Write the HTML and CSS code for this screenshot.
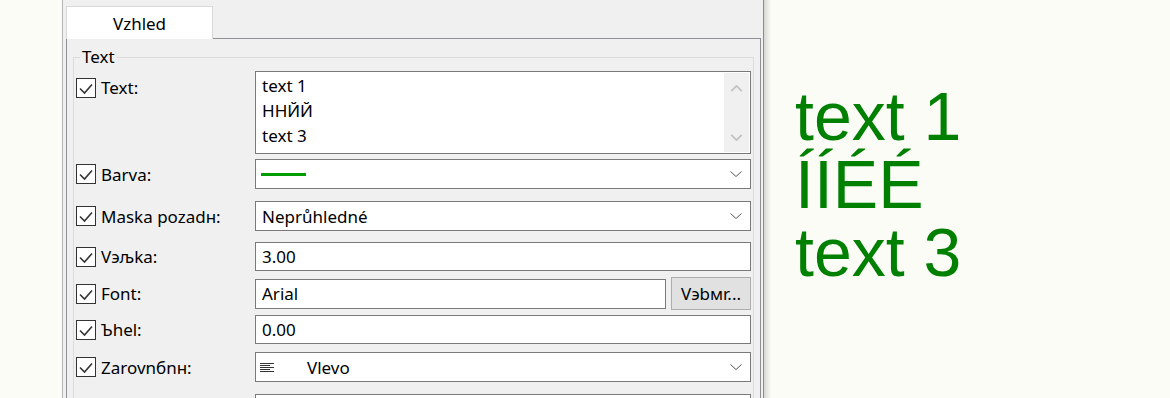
FILE: index.html
```html
<!DOCTYPE html>
<html>
<head>
  <meta charset="UTF-8">
  <title>Vzhled</title>
  <link rel="stylesheet" href="styles.css">
</head>
<body>
  <div class="outer-strip"></div>

  <div class="panel">
    <div class="tab-bar">
      <div class="tab active">Vzhled</div>
    </div>

    <div class="tab-page">
      <fieldset class="group">
        <legend>Text</legend>

        <div class="prop prop-multiline">
          <label class="prop-label">
            <span class="check"><svg viewBox="0 0 18 18"><path d="M3 9.5 L7.5 14 L15 5.5"/></svg></span>
            Text:
          </label>
          <div class="field memo">
            <div class="memo-lines">
              <div>text 1</div>
              <div>ННЙЙ</div>
              <div>text 3</div>
            </div>
            <div class="vscroll">
              <svg viewBox="0 0 14 8"><path d="M1 7 L7 1 L13 7"/></svg>
              <svg viewBox="0 0 14 8"><path d="M1 1 L7 7 L13 1"/></svg>
            </div>
          </div>
        </div>

        <div class="prop gap-a">
          <label class="prop-label">
            <span class="check"><svg viewBox="0 0 18 18"><path d="M3 9.5 L7.5 14 L15 5.5"/></svg></span>
            Barva:
          </label>
          <div class="field combo">
            <span class="color-line"></span>
            <svg class="chevron" viewBox="0 0 12 6"><path d="M0.5 0.5 L6 5.5 L11.5 0.5"/></svg>
          </div>
        </div>

        <div class="prop gap-c">
          <label class="prop-label">
            <span class="check"><svg viewBox="0 0 18 18"><path d="M3 9.5 L7.5 14 L15 5.5"/></svg></span>
            Maska pozadн:
          </label>
          <div class="field combo">
            <span class="value">Neprůhledné</span>
            <svg class="chevron" viewBox="0 0 12 6"><path d="M0.5 0.5 L6 5.5 L11.5 0.5"/></svg>
          </div>
        </div>

        <div class="prop gap-b short">
          <label class="prop-label">
            <span class="check"><svg viewBox="0 0 18 18"><path d="M3 9.5 L7.5 14 L15 5.5"/></svg></span>
            Vэљka:
          </label>
          <div class="field edit">3.00</div>
        </div>

        <div class="prop gap-font tall">
          <label class="prop-label">
            <span class="check"><svg viewBox="0 0 18 18"><path d="M3 9.5 L7.5 14 L15 5.5"/></svg></span>
            Font:
          </label>
          <div class="font-pick">
            <div class="field edit">Arial</div>
            <button class="pick-button">Vэbмr...</button>
          </div>
        </div>

        <div class="prop gap-a short">
          <label class="prop-label">
            <span class="check"><svg viewBox="0 0 18 18"><path d="M3 9.5 L7.5 14 L15 5.5"/></svg></span>
            Ъhel:
          </label>
          <div class="field edit">0.00</div>
        </div>

        <div class="prop gap-d">
          <label class="prop-label">
            <span class="check"><svg viewBox="0 0 18 18"><path d="M3 9.5 L7.5 14 L15 5.5"/></svg></span>
            Zarovnбnн:
          </label>
          <div class="field combo">
            <svg class="align-icon" viewBox="0 0 14 9"><path d="M0 0.5 H14 M0 2.5 H10 M0 4.5 H14 M0 6.5 H10 M0 8.5 H14"/></svg>
            <span class="value align-value">Vlevo</span>
            <svg class="chevron" viewBox="0 0 12 6"><path d="M0.5 0.5 L6 5.5 L11.5 0.5"/></svg>
          </div>
        </div>

        <div class="prop gap-c">
          <label class="prop-label">
            <span class="check"><svg viewBox="0 0 18 18"><path d="M3 9.5 L7.5 14 L15 5.5"/></svg></span>
          </label>
          <div class="field edit"></div>
        </div>
      </fieldset>
    </div>
  </div>

  <div class="panel-shadow"></div>

  <div class="preview">
    <div>text 1</div>
    <div>ÍÍÉÉ</div>
    <div>text 3</div>
  </div>
</body>
</html>
```

FILE: styles.css
```css
:root {
  --page-bg: #fcfcf7;
  --panel-bg: #f0f0f0;
  --field-border: #7a7a7a;
  --group-border: #dcdcdc;
  --tab-border: #d9d9d9;
  --page-border: #8e9196;
  --text-color: #000000;
  --preview-color: #008000;
}

html, body {
  height: 100%;
  margin: 0;
  overflow: hidden;
}

body {
  display: flex;
  background-color: var(--page-bg);
  font-family: "Noto Sans", "Open Sans", sans-serif;
  font-size: 17px;
  color: var(--text-color);
}

.outer-strip {
  width: 62px;
  flex-shrink: 0;
}

.panel {
  width: 695px;
  flex-shrink: 0;
  display: flex;
  flex-direction: column;
  background-color: var(--panel-bg);
  border-left: 1px solid #b4b4b4;
  border-right: 1px solid #8c8c8c;
  padding: 6px 2px 0 3px;
}

.panel-shadow {
  width: 7px;
  flex-shrink: 0;
  background: linear-gradient(to right, #d6d6d2, var(--page-bg));
}

.tab-bar {
  display: flex;
  height: 32px;
}

.tab {
  width: 147px;
  height: 33px;
  box-sizing: border-box;
  border: 1px solid var(--tab-border);
  border-bottom: none;
  background-color: #ffffff;
  text-align: center;
  line-height: 34px;
  position: relative;
  z-index: 1;
  margin-bottom: -1px;
}

.tab-page {
  flex-grow: 1;
  border: 1px solid var(--page-border);
  border-bottom: none;
  padding: 0 6px;
}

.group {
  margin: 6px 0 0 0;
  padding: 0 2px;
  border: 1px solid var(--group-border);
  border-bottom: none;
  min-inline-size: 0;
}

.group legend {
  padding: 0 2px;
  margin-left: 4px;
  line-height: 24px;
}

.prop {
  display: flex;
  align-items: center;
  height: 30px;
  margin-top: 5px;
}
.prop.short { height: 29px; }
.prop.tall { height: 33px; }
.prop.gap-a { margin-top: 5px; }
.prop.gap-b { margin-top: 11px; }
.prop.gap-c { margin-top: 12px; }
.prop.gap-d { margin-top: 8px; }
.prop.gap-font { margin-top: 6px; }

.prop-multiline {
  align-items: flex-start;
  height: 83px;
  margin-top: 2px;
}
.prop-multiline .prop-label {
  margin-top: 5px;
}

.prop-label {
  width: 179px;
  flex-shrink: 0;
  display: flex;
  align-items: center;
  gap: 5px;
  white-space: nowrap;
}

.check {
  width: 20px;
  height: 20px;
  box-sizing: border-box;
  border: 1px solid #333333;
  background-color: #ffffff;
  display: flex;
}
.check svg {
  width: 18px;
  height: 18px;
  fill: none;
  stroke: #333333;
  stroke-width: 1.6;
}

.field {
  width: 496px;
  height: 100%;
  box-sizing: border-box;
  border: 1px solid var(--field-border);
  background-color: #ffffff;
  display: flex;
  align-items: center;
  padding-left: 6px;
}

.memo {
  align-items: stretch;
  padding: 1px 1px 1px 6px;
}
.memo-lines {
  flex-grow: 1;
  line-height: 25px;
}
.vscroll {
  width: 25px;
  background-color: var(--panel-bg);
  display: flex;
  flex-direction: column;
  align-items: center;
  justify-content: space-between;
  padding: 12px 0 11px 0;
}
.vscroll svg {
  width: 13px;
  height: 7px;
  fill: none;
  stroke: #c2c2c2;
  stroke-width: 2;
}

.combo {
  padding-right: 8px;
}
.combo .value {
  flex-grow: 1;
}
.chevron {
  width: 12px;
  height: 6px;
  margin-left: auto;
  fill: none;
  stroke: #555555;
  stroke-width: 1;
}

.color-line {
  width: 45px;
  height: 3px;
  margin-left: -1px;
  background-color: #009c00;
}

.align-icon {
  width: 14px;
  height: 9px;
  margin-left: -2px;
  fill: none;
  stroke: #333333;
  stroke-width: 1;
}
.align-value {
  padding-left: 33px;
}

.font-pick {
  display: flex;
  align-items: center;
  gap: 5px;
  height: 100%;
}
.font-pick .field {
  width: 411px;
  height: 30px;
}
.pick-button {
  width: 80px;
  height: 33px;
  box-sizing: border-box;
  border: 1px solid #adadad;
  background-color: #e1e1e1;
  font-family: inherit;
  font-size: 17px;
  color: var(--text-color);
  padding: 0;
}

.preview {
  padding: 82px 0 0 24px;
  font-family: "Liberation Sans", Arial, sans-serif;
  font-size: 68px;
  line-height: 68px;
  color: var(--preview-color);
}
```
